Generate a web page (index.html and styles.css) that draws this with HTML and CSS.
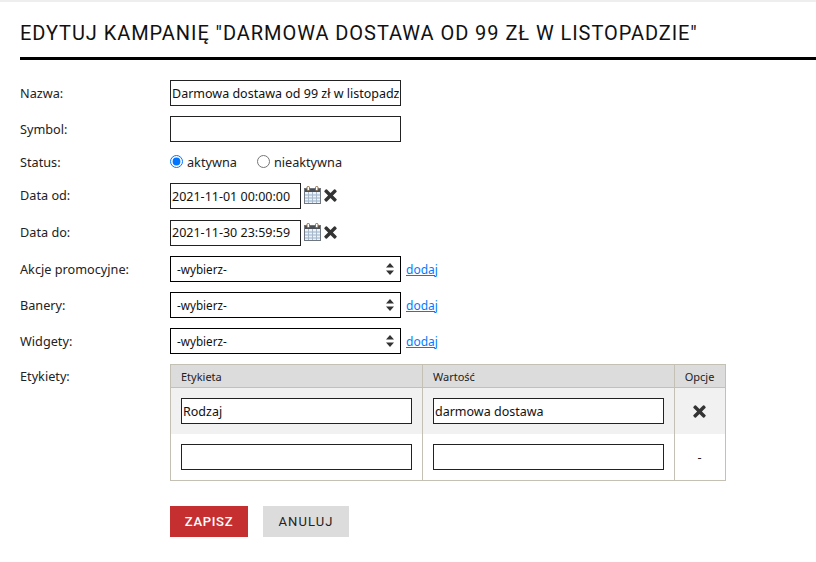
FILE: index.html
```html
<!DOCTYPE html>
<html lang="pl">
<head>
    <meta charset="UTF-8">
    <title>Edytuj kampanię</title>
    <link rel="stylesheet" href="styles.css">
</head>
<body>
    <svg class="defs" width="0" height="0">
        <symbol id="ico-x" viewBox="0 0 14 14">
            <path d="M3.2 .6 7 4.4 10.8 .6a1 1 0 0 1 1.4 0l1.2 1.2a1 1 0 0 1 0 1.4L9.600 7l3.800 3.800a1 1 0 0 1 0 1.400l-1.200 1.200a1 1 0 0 1-1.400 0L7 9.600l-3.800 3.800a1 1 0 0 1-1.400 0L.6 12.200a1 1 0 0 1 0-1.400L4.400 7 .6 3.200a1 1 0 0 1 0-1.400L1.800 .6a1 1 0 0 1 1.400 0z" fill="#333"/>
        </symbol>
        <symbol id="ico-cal" viewBox="0 0 17 18">
            <rect x=".5" y="2.500" width="16" height="15" fill="#eef3f8" stroke="#6f7680"/>
            <rect x="1" y="3" width="15" height="3" fill="#4a4f55"/>
            <path d="M1 9h15M1 12h15M1 15h15" stroke="#8fb0d4"/>
            <path d="M4.500 6v11M8.500 6v11M12.500 6v11" stroke="#a9b8c9"/>
            <rect x="3" y=".5" width="2.500" height="4" rx="1" fill="#fff" stroke="#8a6a3f"/>
            <rect x="11.500" y=".5" width="2.500" height="4" rx="1" fill="#fff" stroke="#8a6a3f"/>
        </symbol>
    </svg>

    <div class="top-strip"></div>
    <h1 class="page-title">Edytuj kampanię "Darmowa dostawa od 99 zł w listopadzie"</h1>

    <form class="form">
        <div class="row">
            <label class="row-label">Nazwa:</label>
            <input class="text-input" type="text" value="Darmowa dostawa od 99 zł w listopadzie">
        </div>
        <div class="row">
            <label class="row-label">Symbol:</label>
            <input class="text-input" type="text">
        </div>
        <div class="row row-status">
            <label class="row-label">Status:</label>
            <label class="radio"><input type="radio" name="status" checked> aktywna</label>
            <label class="radio"><input type="radio" name="status"> nieaktywna</label>
        </div>
        <div class="row row-date">
            <label class="row-label">Data od:</label>
            <input class="text-input date-input" type="text" value="2021-11-01 00:00:00">
            <svg class="ico-cal"><use href="#ico-cal"/></svg>
            <svg class="ico-x"><use href="#ico-x"/></svg>
        </div>
        <div class="row row-date">
            <label class="row-label">Data do:</label>
            <input class="text-input date-input" type="text" value="2021-11-30 23:59:59">
            <svg class="ico-cal"><use href="#ico-cal"/></svg>
            <svg class="ico-x"><use href="#ico-x"/></svg>
        </div>
        <div class="row">
            <label class="row-label">Akcje promocyjne:</label>
            <div class="select-box">-wybierz-<svg class="arrows" viewBox="0 0 8 12"><path d="M4 0 8 4.500H0zM4 12 0 7.500h8z"/></svg></div>
            <a class="add-link" href="#">dodaj</a>
        </div>
        <div class="row">
            <label class="row-label">Banery:</label>
            <div class="select-box">-wybierz-<svg class="arrows" viewBox="0 0 8 12"><path d="M4 0 8 4.500H0zM4 12 0 7.500h8z"/></svg></div>
            <a class="add-link" href="#">dodaj</a>
        </div>
        <div class="row">
            <label class="row-label">Widgety:</label>
            <div class="select-box">-wybierz-<svg class="arrows" viewBox="0 0 8 12"><path d="M4 0 8 4.500H0zM4 12 0 7.500h8z"/></svg></div>
            <a class="add-link" href="#">dodaj</a>
        </div>
        <div class="row row-table">
            <label class="row-label">Etykiety:</label>
            <table class="labels">
                <thead>
                    <tr>
                        <th class="col-wide">Etykieta</th>
                        <th class="col-wide">Wartość</th>
                        <th class="col-opt">Opcje</th>
                    </tr>
                </thead>
                <tbody>
                    <tr class="shaded">
                        <td><input class="text-input" type="text" value="Rodzaj"></td>
                        <td><input class="text-input" type="text" value="darmowa dostawa"></td>
                        <td class="col-opt"><svg class="ico-x-big"><use href="#ico-x"/></svg></td>
                    </tr>
                    <tr>
                        <td><input class="text-input" type="text"></td>
                        <td><input class="text-input" type="text"></td>
                        <td class="col-opt">-</td>
                    </tr>
                </tbody>
            </table>
        </div>
        <div class="buttons">
            <button class="btn btn-save" type="button">Zapisz</button>
            <button class="btn btn-cancel" type="button">Anuluj</button>
        </div>
    </form>
</body>
</html>
```

FILE: styles.css
```css
html, body {
    margin: 0;
    padding: 0;
    background: #fff;
}

body {
    font-family: "Noto Sans", "Open Sans", sans-serif;
    font-size: 12.700px;
    color: #222;
    overflow: hidden;
}

.defs {
    display: block;
    height: 0;
}

.top-strip {
    height: 2px;
    background: #eee;
}

.page-title {
    margin: 0 0 20px 20px;
    padding: 19px 0 12px;
    height: 24px;
    line-height: 24px;
    border-bottom: 3px solid #000;
    font-family: "Roboto", sans-serif;
    font-size: 20px;
    font-weight: 400;
    letter-spacing: .94px;
    text-transform: uppercase;
    color: #111;
}

.row {
    display: flex;
    align-items: center;
    margin-bottom: 10px;
}

.row-label {
    flex: 0 0 150px;
    padding-left: 20px;
}

.row-status {
    height: 19px;
    margin-bottom: 12px;
}

.row-date {
    height: 26.500px;
    align-items: flex-start;
}

.row-date .row-label {
    line-height: 25px;
}

.row-table {
    align-items: flex-start;
    margin-bottom: 25px;
}

.row-table .row-label {
    padding-top: 3px;
}

.text-input {
    box-sizing: border-box;
    width: 231px;
    height: 26px;
    padding: 0 1px;
    border: 1px solid #222;
    border-radius: 0;
    outline: 0;
    background: #fff;
    font-family: inherit;
    font-size: 12.500px;
    color: #111;
}

.date-input {
    width: 131px;
}

.ico-cal {
    width: 17px;
    height: 18px;
    margin: 3px 0 0 3px;
}

.ico-x {
    width: 13px;
    height: 13px;
    margin: 6px 0 0 3px;
}

.ico-x-big {
    display: block;
    width: 13px;
    height: 13px;
    margin: 0 auto;
}

.radio {
    display: flex;
    align-items: center;
    margin-right: 20px;
}

.radio input {
    width: 13px;
    height: 13px;
    margin: 0 4px 0 0;
}

.select-box {
    box-sizing: border-box;
    display: flex;
    align-items: center;
    justify-content: space-between;
    width: 231px;
    height: 26px;
    padding: 0 6px;
    border: 1px solid #000;
    font-size: 11.700px;
    color: #111;
}

.arrows {
    width: 8px;
    height: 12px;
    fill: #333;
}

.add-link {
    margin-left: 5px;
    font-size: 12px;
    color: #007bff;
}

.labels {
    width: 556px;
    border-collapse: collapse;
    table-layout: fixed;
    border: 1px solid #c4c1b4;
}

.labels th {
    box-sizing: border-box;
    height: 23px;
    padding: 0 10px;
    border: 1px solid #c4c1b4;
    background: #dcdcdc;
    font-size: 11px;
    font-weight: 400;
    text-align: left;
}

.labels td {
    padding: 10px;
    border-left: 1px solid #c4c1b4;
    border-right: 1px solid #c4c1b4;
}

.labels td .text-input {
    display: block;
}

.labels .col-wide {
    width: 252px;
}

.labels .col-opt {
    padding: 0 1px 0 0;
    text-align: center;
}

.shaded td {
    background: #f1f1f1;
}

.buttons {
    display: flex;
    gap: 15px;
    padding-left: 170px;
}

.btn {
    height: 31px;
    border: 0;
    font-family: "Roboto", sans-serif;
    font-size: 13px;
    text-transform: uppercase;
}

.btn-save {
    width: 78px;
    background: #c62f2f;
    color: #fff;
    font-weight: 500;
    letter-spacing: .7px;
}

.btn-cancel {
    width: 86px;
    background: #dcdcdc;
    color: #222;
    letter-spacing: 1.100px;
}
```
